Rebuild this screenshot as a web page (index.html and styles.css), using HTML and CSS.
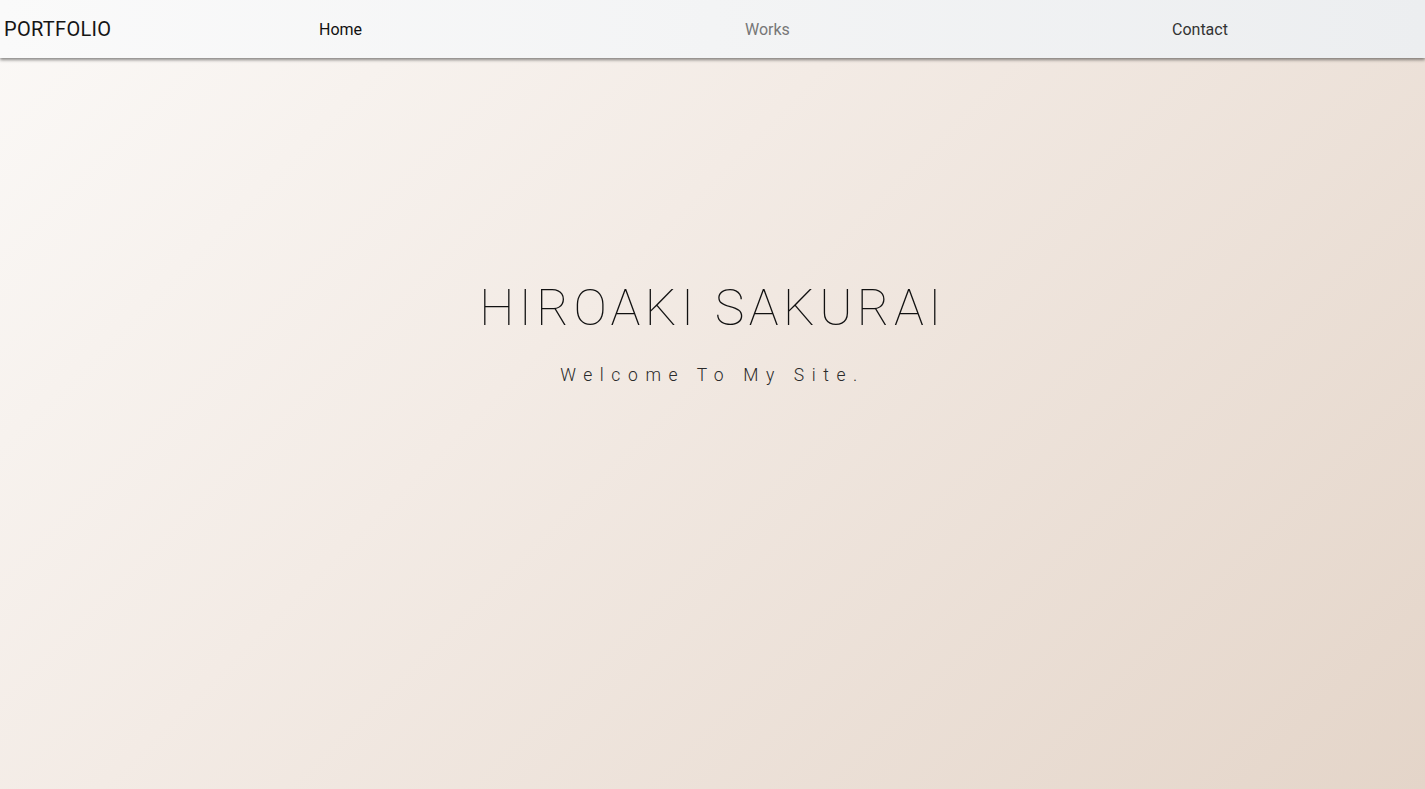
FILE: index.html
```html
<!DOCTYPE html>
<html lang="en">
<head>
<meta charset="utf-8">
<title>Portfolio</title>
<link rel="stylesheet" href="styles.css">
</head>
<body>
<header class="site-header">
  <div class="logo">PORTFOLIO</div>
  <nav class="nav">
    <a class="nav-link" href="#">Home</a>
    <a class="nav-link nav-link--muted" href="#">Works</a>
    <a class="nav-link nav-link--dark" href="#">Contact</a>
  </nav>
</header>
<main class="hero">
  <h1 class="hero-title">HIROAKI SAKURAI</h1>
  <p class="hero-sub">Welcome To My Site.</p>
</main>
</body>
</html>
```
FILE: styles.css
```css
html, body {
  margin: 0;
  padding: 0;
  height: 100%;
}
body {
  font-family: Roboto, "Noto Sans", sans-serif;
  background: linear-gradient(135deg, #fbf9f7 0%, #f3ebe5 40%, #e4d5c9 100%);
  min-height: 789px;
  overflow: hidden;
}
.site-header {
  position: relative;
  z-index: 2;
  height: 58px;
  display: flex;
  align-items: center;
  background: linear-gradient(90deg, #fafafa 0%, #eceef0 100%);
  box-shadow: 0 2px 3px rgba(0, 0, 0, 0.45);
}
.logo {
  padding-left: 4px;
  width: 315px;
  font-size: 20px;
  color: #151515;
  letter-spacing: 0.3px;
}
.nav {
  display: grid;
  grid-template-columns: 426px 427px auto;
}
.nav-link {
  font-size: 16px;
  color: #111;
  text-decoration: none;
}
.nav-link--muted {
  color: #777;
}
.nav-link--dark {
  color: #333;
}
.hero {
  display: flex;
  flex-direction: column;
  align-items: center;
  padding-top: 220px;
}
.hero-title {
  margin: 0;
  font-weight: 100;
  font-size: 50px;
  letter-spacing: 4.4px;
  color: #111;
  line-height: 1.2;
  padding-left: 0;
}
.hero-sub {
  margin: 27px 0 0;
  font-weight: 300;
  font-size: 17.5px;
  letter-spacing: 7.6px;
  color: #2a2a2a;
  padding-left: 0;
}
```
